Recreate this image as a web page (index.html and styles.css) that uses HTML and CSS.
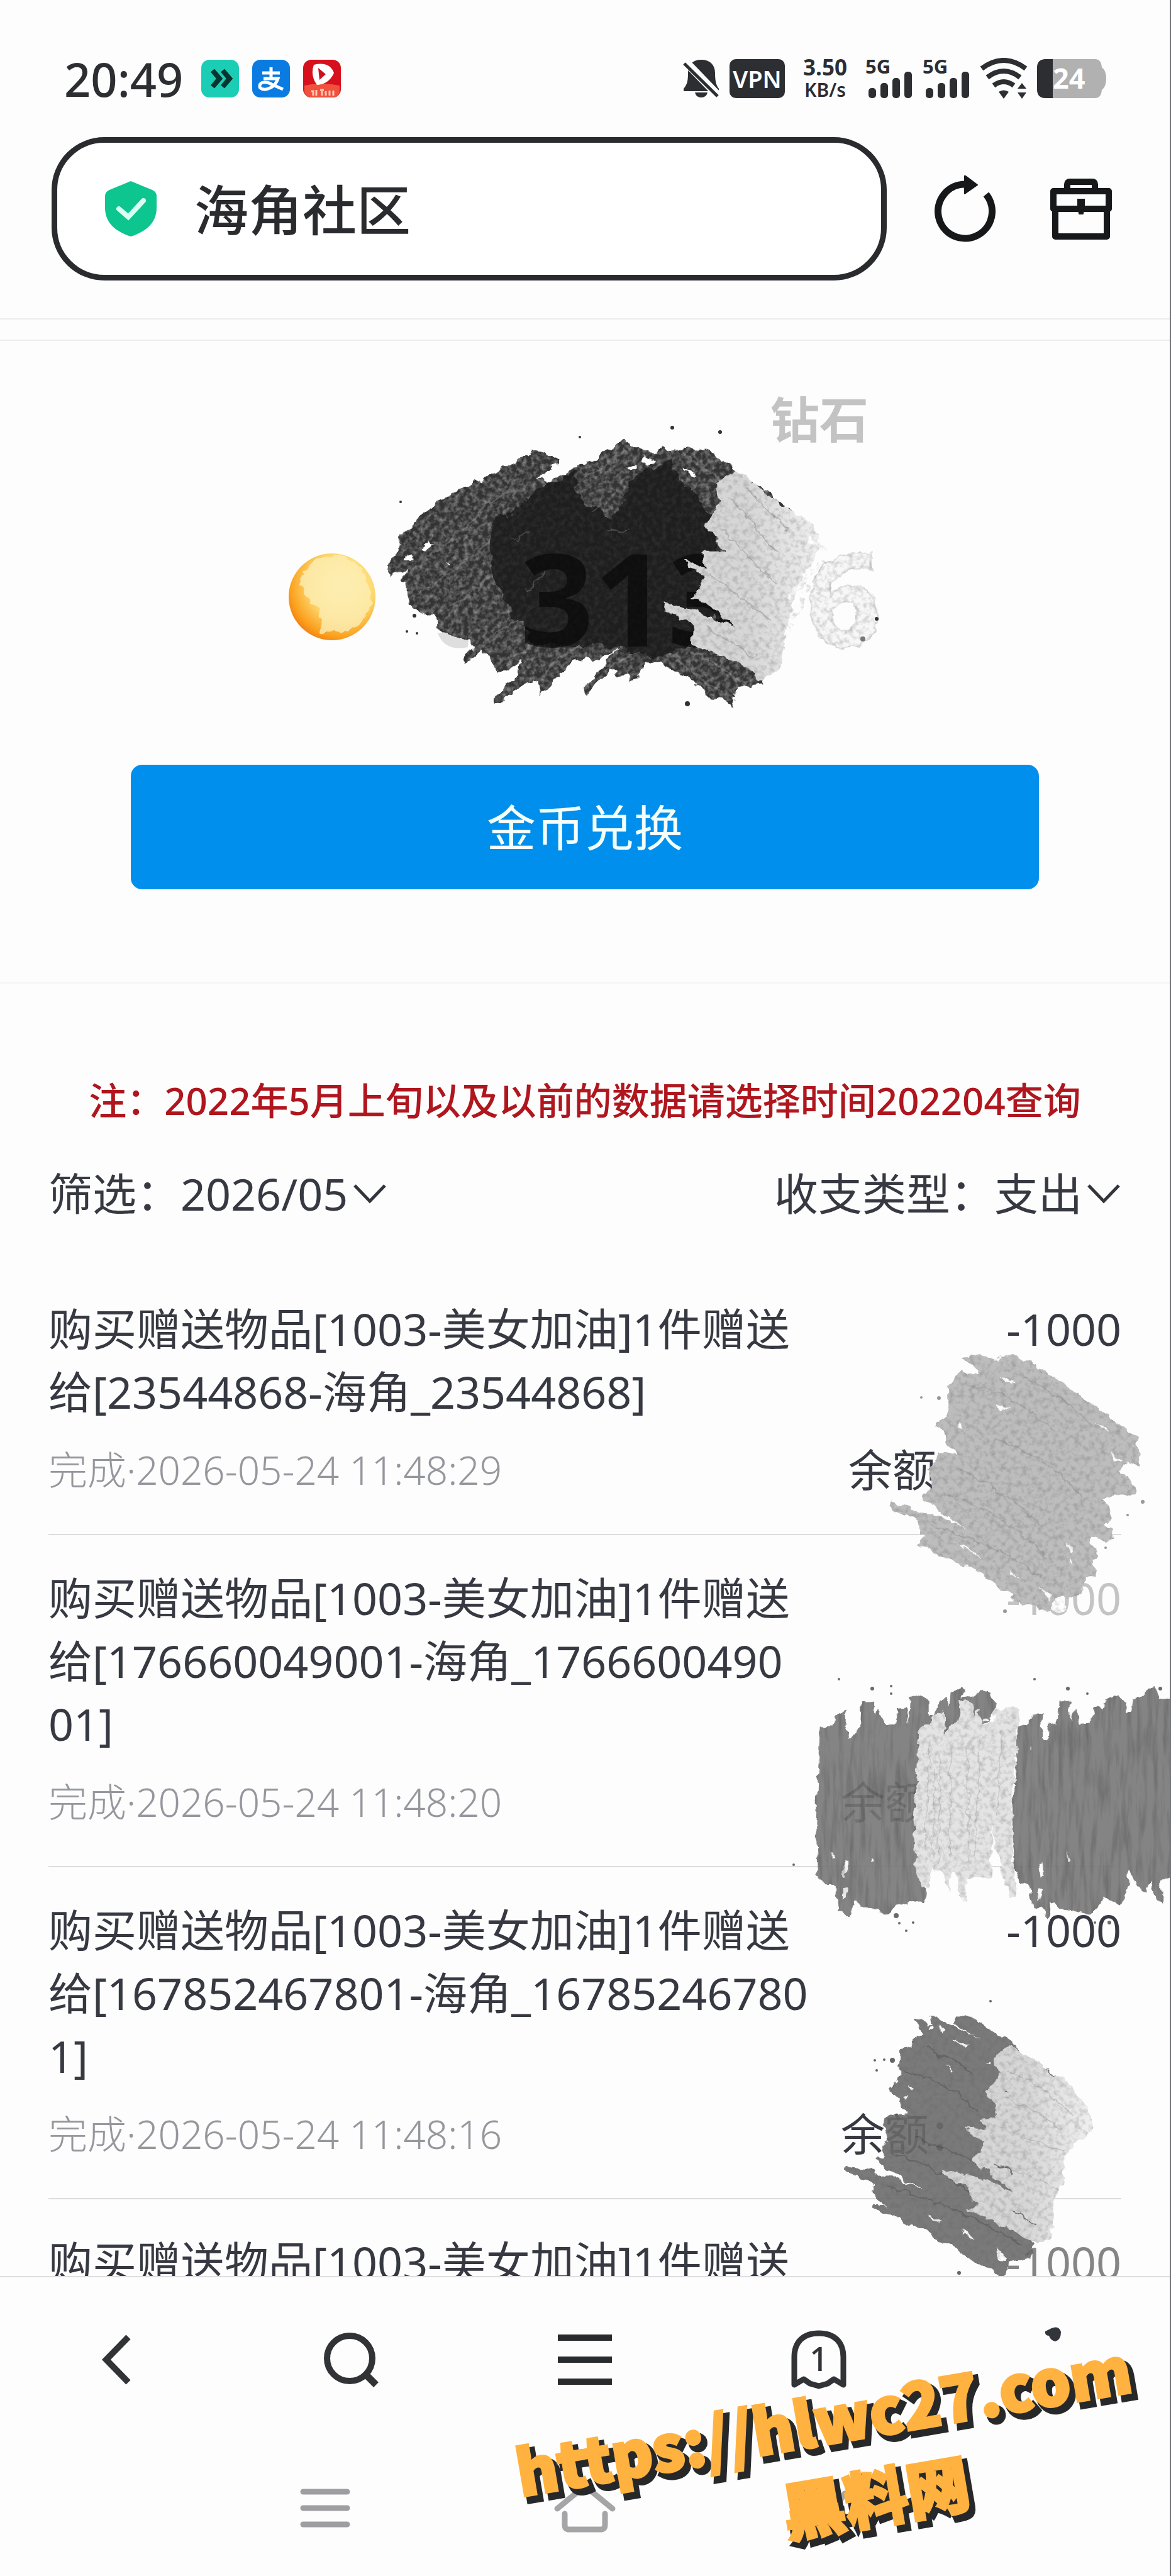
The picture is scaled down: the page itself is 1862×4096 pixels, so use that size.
FILE: index.html
```html
<!DOCTYPE html>
<html lang="zh-CN">
<head>
    <meta charset="UTF-8">
    <meta name="viewport" content="width=device-width, initial-scale=1.0">
    <title>海角社区</title>
    <link rel="stylesheet" href="styles.css">
</head>
<body>
    <div class="page">
        <header>
            <div class="status">
                <div class="status-left">
                    <span class="time">20:49</span>
                    <svg class="app" viewBox="0 0 60 60"><rect width="60" height="60" rx="13" fill="#1ccdb6"/><path d="M18 17l11 13-11 13M34 17l11 13-11 13" fill="none" stroke="#06352f" stroke-width="8"/></svg>
                    <svg class="app" viewBox="0 0 60 60"><rect width="60" height="60" rx="13" fill="#0a7be0"/><path d="M16 21h28M30 12v18M18 30h23c-3 9-8 13-13 15-8 4-17 2-16-4 1-7 12-6 19-2l18 8" fill="none" stroke="#fff" stroke-width="5"/></svg>
                    <svg class="app" viewBox="0 0 60 60"><rect width="60" height="60" rx="13" fill="#d6101d"/><path d="M2 41q28-6 56 0v8q0 11-11 11H13Q2 60 2 49z" fill="#f0503c"/><path d="M17 8q25-6 32 13-8 18-27 19Q11 25 17 8z" fill="#fff"/><path d="M24 13l12 10-10 9z" fill="#c91322"/><path d="M13 50h3v7M21 48v9M27 48h6M30 48v9M36 50v7M42 49v8M48 49v8" stroke="#ffc9b5" stroke-width="3" fill="none"/></svg>
                </div>
                <div class="status-right">
                    <svg class="bell" viewBox="0 0 60 64"><path d="M30 2c14 0 22 8 22 21 0 14 2 20 6 25v4H2v-4c6-7 7-13 7-25C9 10 16 2 30 2zM20 54h20q-2 8-10 8t-10-8z" fill="#2d2e32"/><path d="M2 2l56 58" stroke="#fdfdfd" stroke-width="13"/><path d="M3 8l53 52" stroke="#2d2e32" stroke-width="5"/></svg>
                    <span class="vpn">VPN</span>
                    <span class="speed">3.50<small>KB/s</small></span>
                    <svg class="signal" viewBox="0 0 76 66"><text x="0" y="25">5G</text><g fill="#2d2e32"><rect x="5" y="48" width="12" height="16" rx="5"/><rect x="24" y="40" width="12" height="24" rx="5"/><rect x="43" y="32" width="12" height="32" rx="5"/><rect x="62" y="22" width="12" height="42" rx="5"/></g></svg>
                    <svg class="signal" viewBox="0 0 76 66"><text x="0" y="25">5G</text><g fill="#2d2e32"><rect x="5" y="48" width="12" height="16" rx="5"/><rect x="24" y="40" width="12" height="24" rx="5"/><rect x="43" y="32" width="12" height="32" rx="5"/><rect x="62" y="22" width="12" height="42" rx="5"/></g></svg>
                    <svg class="wifi" viewBox="0 0 76 66"><path d="M3 17q35-26 70 0M12 31q26-20 52 0M22 44q16-12 32 0" fill="none" stroke="#2d2e32" stroke-width="8"/><path d="M30 54q8-5 16 0l-8 11zM60 49l7-9 7 9zM60 55h14l-7 10z" fill="#2d2e32"/></svg>
                    <svg class="battery" viewBox="0 0 110 62"><path d="M14 0h78q10 0 11 13 7 5 7 18t-7 18q-1 13-11 13H14Q0 62 0 48V14Q0 0 14 0z" fill="#b1b1b1"/><path d="M25 0H14Q0 0 0 14v34q0 14 14 14h11z" fill="#2d2e32"/><text x="25" y="47">24</text></svg>
                </div>
            </div>
            <div class="toolbar">
                <label class="address">
                    <svg class="shield" viewBox="0 0 82 88"><path d="M41 0l34 14q7 3 7 10v18c0 24-16 38-41 46C16 80 0 66 0 42V24q0-7 7-10z" fill="#0cc58f"/><path d="M22 44l15 13 24-26" fill="none" stroke="#d9fff2" stroke-width="8" stroke-linecap="round"/></svg>
                    <input type="text" value="海角社区" aria-label="地址">
                </label>
                <button class="icon" aria-label="刷新">
                    <svg width="100" height="106" viewBox="0 0 100 106"><path d="M83 30A43 43 0 1 1 50 14" fill="none" stroke="#17181a" stroke-width="11"/><path d="M49 0l20 15-20 14z" fill="#17181a" stroke="#17181a" stroke-width="2" stroke-linejoin="round"/></svg>
                </button>
                <button class="icon" aria-label="工具箱">
                    <svg width="100" height="100" viewBox="0 0 100 100"><path d="M28 20v-9q0-4 4-4h36q4 0 4 4v9M6 22h88v28H6zM9 50v44h82V50" fill="none" stroke="#17181a" stroke-width="10" stroke-linejoin="round"/><path d="M46 36h8v12l-2 9h-4l-2-9z" fill="#17181a" stroke="#17181a" stroke-width="4"/></svg>
                </button>
            </div>
        </header>

        <main>
            <section class="balance">
                <svg class="coins" viewBox="0 0 1062 560">
                    <defs>
                        <radialGradient id="coin" cx=".62" cy=".36" r=".75">
                            <stop offset="0" stop-color="#fff3a6"/>
                            <stop offset=".5" stop-color="#fdd76e"/>
                            <stop offset=".8" stop-color="#fba11f"/>
                            <stop offset="1" stop-color="#ee6a0a"/>
                        </radialGradient>
                        <linearGradient id="pale">
                            <stop offset=".55" stop-color="#d6d6d6"/>
                            <stop offset="1" stop-color="#f0f0f0"/>
                        </linearGradient>
                        <filter id="rough" x="-5%" y="-5%" width="110%" height="110%" color-interpolation-filters="sRGB">
                            <feTurbulence type="fractalNoise" baseFrequency=".05" numOctaves="3" seed="4" result="n"/>
                            <feDisplacementMap in="SourceGraphic" in2="n" scale="18" xChannelSelector="R" yChannelSelector="G" result="s"/>
                            <feTurbulence type="fractalNoise" baseFrequency=".13" numOctaves="3" seed="9"/>
                            <feColorMatrix values="0 0 0 0 .75  0 0 0 0 .75  0 0 0 0 .75  1.2 0 0 0 -.45"/>
                            <feComposite operator="in" in2="s" result="t"/>
                            <feMerge><feMergeNode in="s"/><feMergeNode in="t"/></feMerge>
                        </filter>
                        <filter id="edge" x="-5%" y="-5%" width="110%" height="110%" color-interpolation-filters="sRGB">
                            <feTurbulence type="fractalNoise" baseFrequency=".05" numOctaves="3" seed="6" result="n"/>
                            <feDisplacementMap in="SourceGraphic" in2="n" scale="22" xChannelSelector="R" yChannelSelector="G"/>
                        </filter>
                        <filter id="grain" x="-5%" y="-5%" width="110%" height="110%" color-interpolation-filters="sRGB">
                            <feTurbulence type="fractalNoise" baseFrequency=".06" numOctaves="3" seed="2" result="n"/>
                            <feDisplacementMap in="SourceGraphic" in2="n" scale="14" xChannelSelector="R" yChannelSelector="G" result="s"/>
                            <feTurbulence type="fractalNoise" baseFrequency=".12" numOctaves="3" seed="7"/>
                            <feColorMatrix values="0 0 0 0 .3  0 0 0 0 .3  0 0 0 0 .3  .6 0 0 0 -.26"/>
                            <feComposite operator="in" in2="s" result="t"/>
                            <feMerge><feMergeNode in="s"/><feMergeNode in="t"/></feMerge>
                        </filter>
                        <filter id="streak" x="-5%" y="-5%" width="110%" height="110%" color-interpolation-filters="sRGB">
                            <feTurbulence type="fractalNoise" baseFrequency=".05" numOctaves="3" seed="3" result="n"/>
                            <feDisplacementMap in="SourceGraphic" in2="n" scale="14" xChannelSelector="R" yChannelSelector="G" result="s"/>
                            <feTurbulence type="fractalNoise" baseFrequency=".12 .014" numOctaves="4" seed="5"/>
                            <feColorMatrix values="0 0 0 0 .25  0 0 0 0 .25  0 0 0 0 .25  1 0 0 0 -.42"/>
                            <feComposite operator="in" in2="s" result="t"/>
                            <feMerge><feMergeNode in="s"/><feMergeNode in="t"/></feMerge>
                        </filter>
                    </defs>
                    <text class="unit" x="826" y="105">钻石</text>
                    <circle cx="129" cy="357" r="69" fill="url(#coin)"/>
                    <path d="M80 345q-4-34 28-50 30-14 60 12 22 20 22 52 0 28-24 50-22 8-50 4-8-18-6-38-26-6-30-30z" fill="#fdeeb4" opacity=".8" filter="url(#edge)"/>
                    <path d="M297 415q12 30 48 22l2-32z" fill="#dedede"/>
                    <g filter="url(#rough)"><g transform="scale(.6633 .3571)">
                        <path fill="#333" d="M675 350L735 380 730 430 685 475 715 485 780 430 850 360 890 305 975 370 985 330 1010 360 1035 335 1080 338 1165 440 1300 620 1200 1300 1230 1390 1165 1400 1155 1485 1100 1440 1040 1350 980 1300 950 1290 910 1390 905 1340 880 1350 860 1330 805 1430 800 1400 880 1230 820 1290 805 1250 750 1330 695 1435 690 1370 655 1390 590 1480 585 1440 640 1350 650 1290 590 1335 580 1280 550 1240 510 1300 515 1250 540 1220 500 1180 445 1150 445 1090 375 1030 375 940 360 930 375 870 330 920 335 830 355 800 360 720 450 580 510 520 600 430z"/>
                        <path fill="none" stroke="#555" stroke-width="7" d="M380 900L640 480M400 1000L700 560M470 1080L660 760M560 1200L700 1020M620 1290L760 1100M700 1330L800 1200M850 1330L930 1230M800 470L900 350M1040 370l90 110M1010 1260l120 170M1060 1250l130 130"/>
                    </g></g>
                    <path fill="#fdfdfd" filter="url(#edge)" transform="scale(.6633 .3571)" d="M705 460l25-60 15 30-15 30zM410 790l15-40 10 15-12 35zM370 820l12-5v22h-12zM935 400l8-30 30 35-20 8zM900 425l25-15v20l-15 8zM1030 420l38 30-8 20zM470 850l10 5-6 8z"/>
                    <g filter="url(#edge)" opacity=".8"><g transform="scale(.6633 .3571)">
                        <path fill="#191919" d="M780 440L690 520 640 600 590 650 570 800 600 1000 680 1210 880 1220 960 1280 1050 1210 1110 1180 1110 900 1120 700 1070 560 1000 400 910 470 900 560 870 640 800 580 780 520z"/>
                        <path fill="none" stroke="#444" stroke-width="6" d="M630 750l30-50M860 700q20 40 50 0M820 620l30-40M790 540l50-70M700 900l-40 80"/>
                    </g></g>
                    <g class="ghost"><text x="428" y="436">313</text></g>
                    <g filter="url(#grain)"><g transform="scale(.6633 .3571)">
                        <path fill="url(#pale)" d="M1165 440L1115 500 1122 570 1090 680 1138 800 1080 800 1090 880 1040 830 1050 870 1088 905 1060 1000 1110 1060 1165 1135 1060 1060 985 1020 990 1060 1060 1120 1055 1210 1150 1280 1190 1320 1225 1380 1270 1310 1285 1150 1310 950 1365 780 1350 680 1260 570z"/>
                        <path fill="none" stroke="#fdfdfd" stroke-width="14" d="M1290 1000l80-160M1280 1180l60-240M1320 900l60-50M1340 740l40 60"/>
                        <path fill="none" stroke="#b5b5b5" stroke-width="4" d="M1150 560l110 240M1130 700l130 250M1100 900l150 210M1090 1130l120 140M1190 520l100 190"/>
                    </g></g>
                    <text class="faint" x="885" y="436" filter="url(#grain)">6</text>
                    <g fill="#333"><circle cx="238" cy="206" r="2"/><circle cx="523" cy="103" r="2"/><circle cx="670" cy="88" r="3"/><circle cx="746" cy="95" r="3"/><circle cx="260" cy="387" r="3"/><circle cx="248" cy="412" r="2"/><circle cx="264" cy="415" r="2"/><circle cx="694" cy="527" r="4"/><circle cx="995" cy="392" r="3"/><circle cx="973" cy="424" r="4" fill="#777"/></g>
                </svg>
                <button class="exchange">金币兑换</button>
            </section>

            <p class="note">注：2022年5月上旬以及以前的数据请选择时间202204查询</p>

            <div class="filters">
                <div class="filter">
                    <label for="month">筛选：</label>
                    <select id="month"><option>2026/05</option></select>
                    <svg class="caret" viewBox="0 0 56 36"><path d="M4 5l24 25L52 5" fill="none" stroke="#33353d" stroke-width="5"/></svg>
                </div>
                <div class="filter">
                    <label for="type">收支类型：</label>
                    <select id="type"><option>支出</option></select>
                    <svg class="caret" viewBox="0 0 56 36"><path d="M4 5l24 25L52 5" fill="none" stroke="#33353d" stroke-width="5"/></svg>
                </div>
            </div>

            <div class="records">
                <article class="record">
                    <div class="row"><p>购买赠送物品[1003-美女加油]1件赠送<br>给[23544868-海角_23544868]</p><span>-1000</span></div>
                    <div class="row meta"><time>完成·2026-05-24 11:48:29</time><span class="rest">余额：</span></div>
                </article>
                <article class="record">
                    <div class="row"><p>购买赠送物品[1003-美女加油]1件赠送<br>给[176660049001-海角_1766600490<br>01]</p><span class="worn">-1000</span></div>
                    <div class="row meta"><time>完成·2026-05-24 11:48:20</time><span class="rest">余额：</span></div>
                </article>
                <article class="record">
                    <div class="row"><p>购买赠送物品[1003-美女加油]1件赠送<br>给[167852467801-海角_16785246780<br>1]</p><span>-1000</span></div>
                    <div class="row meta"><time>完成·2026-05-24 11:48:16</time><span class="rest">余额：</span></div>
                </article>
                <article class="record">
                    <div class="row"><p>购买赠送物品[1003-美女加油]1件赠送</p><span class="worn dark">-1000</span></div>
                </article>

                <svg class="scribble first" viewBox="0 0 662 560">
                    <g filter="url(#grain)"><g transform="scale(.4224 .3571)">
                        <path fill="#bdbdbd" d="M780 350L840 340 915 370 925 345 990 345 1120 435 1270 560 1440 710 1450 840 1400 820 1375 855 1435 930 1430 965 1375 965 1310 985 1340 1040 1345 1080 1310 1085 1350 1120 1345 1165 1320 1170 1265 1150 1260 1180 1295 1210 1290 1250 1275 1255 1290 1325 1240 1330 1230 1410 1170 1420 1115 1440 1170 1490 1080 1485 955 1430 970 1410 900 1360 830 1300 610 1190 620 1165 650 1150 615 1130 620 1080 515 1030 515 1000 650 1050 700 1060 800 1120 630 985 640 960 665 940 660 850 690 780 760 780 715 730 715 690 680 660 725 620 725 490 780 420 850 425z"/>
                        <path fill="#fdfdfd" d="M925 430l55 40-35-8zM908 560l70 25-55 5zM760 650l30 25-25-8zM1285 645l50 45-30-15zM1345 775l40 50-30-10zM735 1175q80 25 125 80-60-50-125-80zM960 1290l30 50-22-20zM1075 1375l50 45-20 15zM1170 1180l28 35-10 5zM1185 1250l10 30-12-15z"/>
                        <path fill="none" stroke="#a9a9a9" stroke-width="6" d="M800 470q200 60 330 210M760 850q200 110 330 260M700 960q220 60 400 290M900 720q200 60 330 260M1010 440q160 90 260 220M660 1100q200 60 420 230"/>
                        <ellipse cx="1148" cy="1462" rx="25" ry="28" fill="#fdfdfd"/>
                    </g></g>
                    <g fill="#999"><circle cx="293" cy="191" r="3"/><circle cx="265" cy="190" r="2"/><circle cx="398" cy="530" r="3"/><circle cx="617" cy="356" r="3"/><circle cx="593" cy="377" r="2"/><circle cx="558" cy="429" r="2"/></g>
                </svg>

                <svg class="scribble second" viewBox="0 0 662 560">
                    <g filter="url(#streak)" opacity=".9"><g transform="scale(.4224 .3571)">
                        <path fill="#787878" d="M250 430L295 425 300 385 345 365 345 430 360 490 400 430 405 320 450 315 450 380 470 350 490 420 525 420 540 350 570 345 580 410 585 300 620 288 655 310 655 380 675 380 690 305 720 298 735 340 740 280 770 250 790 260 775 310 825 300 850 265 880 275 915 330 880 420 730 460 640 600 620 1090 645 1150 640 1220 580 1200 570 1220 530 1225 510 1260 480 1265 460 1240 395 1240 385 1210 375 1210 360 1285 335 1240 312 1240 300 1140 270 1140 240 1100 230 880 240 600z"/>
                        <path fill="#787878" d="M990 430L1035 420 1045 380 1082 365 1085 490 1105 490 1108 425 1140 420 1145 318 1187 315 1190 400 1208 355 1225 420 1265 415 1275 350 1300 340 1318 370 1322 300 1358 288 1392 320 1395 375 1418 370 1425 300 1465 295 1475 270 1505 250 1525 300 1600 290 1600 1100 1530 1105 1530 1215 1505 1190 1495 1115 1475 1170 1440 1140 1415 1070 1405 1150 1375 1225 1310 1195 1300 1220 1260 1265 1210 1250 1150 1240 1120 1200 1105 1285 1075 1230 1045 1240 1038 1140 1000 1130 975 1060 965 900 980 650z"/>
                        <path fill="#fdfdfd" d="M332 1030h14v70l-12 5zM440 1010l12 20-16 14zM290 990h6v20h-6zM330 1150l20-2-4 50-14 6zM350 440l15 40-12 10zM1065 1030h18v70l-12 5zM1060 1150l20-2-4 50-12 6zM1170 980l15 55-10 5zM1038 510h5v20h-5zM860 400h22v12h-22z"/>
                    </g></g>
                    <g filter="url(#grain)"><g transform="scale(.4224 .3571)">
                        <path fill="#e4e4e4" d="M620 440L655 420 660 390 690 365 715 370 715 420 720 470 735 420 760 410 775 320 800 310 818 330 825 385 835 350 860 420 895 415 905 360 940 345 1000 345 1000 400 985 450 985 560 975 700 970 900 975 1040 985 1180 960 1190 940 1110 905 970 895 870 890 1100 800 1100 795 1215 765 1180 755 1080 740 1070 738 1170 705 1080 690 1070 665 1060 660 1150 625 1140 605 1060 598 850 610 600z"/>
                        <path fill="none" stroke="#c8c8c8" stroke-width="4" d="M655 480l-10 500M700 560l-8 480M740 520l-6 500M800 500l4 540M850 480l-20 540M930 440l-20 380M680 620l-12 400"/>
                    </g></g>
                    <g fill="#6a6a6a"><circle cx="134" cy="78" r="2"/><circle cx="187" cy="93" r="3"/><circle cx="217" cy="89" r="2"/><circle cx="217" cy="101" r="2"/><circle cx="445" cy="78" r="2"/><circle cx="498" cy="93" r="3"/><circle cx="529" cy="101" r="2"/><circle cx="645" cy="93" r="3"/><circle cx="62" cy="373" r="2"/><circle cx="225" cy="454" r="4"/><circle cx="230" cy="466" r="2"/><circle cx="252" cy="465" r="2"/><circle cx="241" cy="478" r="2"/><circle cx="541" cy="465" r="2"/><circle cx="564" cy="465" r="3"/></g>
                </svg>

                <svg class="scribble third" viewBox="0 0 662 560">
                    <g filter="url(#grain)" opacity=".9"><g transform="scale(.4224 .3571)">
                        <path fill="#6c6c6c" d="M605 260L625 250 670 280 655 245 670 235 760 290 850 345 745 270 755 245 810 245 880 300 960 345 1000 395 1000 700 950 900 1000 1100 1050 1265 1045 1310 960 1335 945 1390 920 1390 860 1355 815 1330 745 1260 690 1245 640 1190 520 1135 440 1095 445 1075 480 1075 500 1095 445 1030 450 980 340 935 345 905 420 920 480 955 500 950 640 1020 560 970 455 880 460 865 490 870 480 830 500 790 485 690 520 675 580 680 545 640 540 595 500 570 545 520 545 440 550 385 600 370 605 330 640 325z"/>
                        <path fill="#fdfdfd" d="M745 335l58 30-8 16zM695 290h20l-5 30zM665 285l12 10-8 8zM730 460l20 25-4 8zM582 548l14 15-10 8zM562 605l15-4-6 18zM875 450l18-6v14zM655 1130q30 5 42 30-20-5-42-30zM775 1190q30 10 45 52-24-20-45-52zM903 1275l52 45-15 14-20-10z"/>
                        <path fill="none" stroke="#545454" stroke-width="6" d="M640 380q120 60 190 120M560 480q180 60 280 190M520 860q200 60 320 200M500 1000q280 90 500 260M600 780q140 50 230 120"/>
                    </g></g>
                    <g filter="url(#grain)"><g transform="scale(.4224 .3571)">
                        <path fill="url(#pale)" d="M965 370L910 405 905 460 925 490 900 530 865 575 905 640 910 690 850 700 870 745 790 735 800 755 865 800 850 850 820 890 990 1030 860 960 705 920 710 950 800 1000 810 1040 840 1080 800 1100 900 1155 980 1200 1060 1250 1120 1220 1125 1060 1165 960 1160 880 1210 800 1275 740 1250 640 1170 530z"/>
                        <path fill="none" stroke="#bfbfbf" stroke-width="4" d="M950 480q160 90 250 210M880 720q160 70 280 120M910 900q140 60 230 110M940 600q120 60 220 150"/>
                        <path fill="none" stroke="#6c6c6c" stroke-width="5" d="M910 900l60 35M970 1105l90 70M950 570l15 12M1105 475l25 25"/>
                    </g></g>
                    <g fill="#666"><circle cx="375" cy="62" r="2"/><circle cx="219" cy="156" r="4"/><circle cx="206" cy="155" r="2"/><circle cx="191" cy="156" r="2"/><circle cx="194" cy="172" r="2"/><circle cx="325" cy="494" r="3"/></g>
                </svg>
            </div>
        </main>

        <footer>
            <nav class="tabs">
                <button aria-label="后退"><svg width="90" height="96" viewBox="0 0 90 96"><path d="M63 12L28 48l35 36" fill="none" stroke="#323337" stroke-width="10"/></svg></button>
                <button aria-label="搜索"><svg width="90" height="96" viewBox="0 0 90 96"><circle cx="43" cy="46" r="36" fill="none" stroke="#323337" stroke-width="10"/><path d="M67 70l18 18" stroke="#323337" stroke-width="11"/></svg></button>
                <button aria-label="菜单"><svg width="90" height="96" viewBox="0 0 90 96"><path d="M2 13h86M2 48h86M2 83h86" stroke="#2a2b2f" stroke-width="10"/></svg></button>
                <button aria-label="标签页"><svg width="90" height="96" viewBox="0 0 90 96"><path d="M6 88V44C6 20 20 6 45 6s39 14 39 38v44L69 79 59 86 45 90 31 86 21 79z" fill="none" stroke="#323337" stroke-width="9" stroke-linejoin="round"/><text x="45" y="66">1</text></svg></button>
                <button aria-label="我的"><svg width="90" height="96" viewBox="0 0 90 96"><path d="M33 3l10-5q12-5 15 6 0 13-9 15-8-2-10-9-7 0-6-7z" fill="#32363b"/></svg></button>
            </nav>
            <nav class="system">
                <button aria-label="最近任务"><svg width="100" height="76" viewBox="0 0 100 76"><path d="M15 11h70M15 37h70M15 63h70" stroke="#9e9ea1" stroke-width="9" stroke-linecap="round"/></svg></button>
                <button aria-label="主页"><svg width="100" height="76" viewBox="0 0 100 76"><path d="M6 38L46 5q4-3 8 0l40 33M18 46v18q0 7 7 7h50q7 0 7-7V46" fill="none" stroke="#a5a5a7" stroke-width="9" stroke-linecap="round"/></svg></button>
                <button aria-label="返回"><svg width="100" height="76" viewBox="0 0 100 76"><path d="M50 14L34 38l22 18" fill="none" stroke="#a5a5a7" stroke-width="9" stroke-linecap="round"/></svg></button>
            </nav>
        </footer>

        <svg class="stamp" viewBox="0 0 1062 400">
            <g transform="rotate(-9.7 34 274)"><text class="shade" x="34" y="282">https://hlwc27.com</text><text x="28" y="273">https://hlwc27.com</text></g>
            <g transform="rotate(-9.7 460 342)"><text class="shade" x="458" y="346">黑料网</text><text x="452" y="337">黑料网</text></g>
        </svg>
    </div>
</body>
</html>
```
FILE: styles.css
```css
* {
    box-sizing: border-box;
}
body {
    margin: 0;
    background: #fdfdfd;
    color: #373942;
    font-family: "Noto Sans", "Noto Sans CJK SC", sans-serif;
    font-size: 70px;
}
button, input, select {
    font: inherit;
    color: inherit;
    border: none;
    background: none;
    padding: 0;
    margin: 0;
}
svg {
    display: block;
    flex-shrink: 0;
}
p {
    margin: 0;
}
.page {
    position: relative;
    display: flex;
    flex-direction: column;
    height: 100vh;
    overflow: hidden;
    border-right: 2px solid #70737b;
}

/* status bar */
.status {
    display: flex;
    justify-content: space-between;
    align-items: center;
    height: 70px;
    margin: 90px 101px 58px 102px;
    color: #2d2e32;
}
.status-left, .status-right {
    display: flex;
    align-items: center;
}
.status-left {
    gap: 21px;
}
.status-right {
    gap: 15px;
}
.time {
    font-size: 74px;
    font-weight: 500;
    margin-right: 8px;
}
.app {
    width: 60px;
    height: 60px;
}
.bell {
    width: 60px;
    height: 64px;
}
.vpn {
    width: 88px;
    height: 62px;
    border-radius: 10px;
    background: #2d2e32;
    color: #fff;
    font-size: 38px;
    font-weight: 600;
    line-height: 62px;
    text-align: center;
}
.speed {
    width: 98px;
    font-size: 35px;
    font-weight: 700;
    line-height: 36px;
    text-align: center;
}
.speed small {
    display: block;
    font-size: 30px;
    font-weight: 600;
}
.signal, .wifi {
    width: 76px;
    height: 66px;
}
.signal {
    overflow: visible;
}
.signal text {
    font-size: 31px;
    font-weight: 700;
    fill: #2d2e32;
}
.battery {
    width: 110px;
    height: 62px;
}
.battery text {
    font-size: 45px;
    font-weight: 700;
    fill: #fff;
}

/* address bar */
.toolbar {
    display: flex;
    align-items: center;
    padding: 0 91px 60px 82px;
    border-bottom: 2px solid #ececec;
}
.address {
    display: flex;
    flex: 1;
    min-width: 0;
    align-items: center;
    gap: 60px;
    height: 228px;
    padding: 0 76px;
    border: 9px solid #2a2b2e;
    border-radius: 84px;
    background: #fff;
}
.shield {
    width: 82px;
    height: 88px;
}
.address input {
    flex: 1;
    min-width: 0;
    padding-bottom: 6px;
    font-size: 86px;
    font-weight: 500;
    color: #2a2b2e;
}
.icon {
    margin-left: 84px;
}
.icon:nth-of-type(1) {
    margin-left: 75px;
}

/* balance */
main {
    flex: 1;
    min-height: 0;
    overflow: hidden;
    margin-top: 32px;
    border-top: 2px solid #ececec;
}
.balance {
    padding: 50px 208px 148px;
    border-bottom: 2px solid #f4f4f4;
}
.coins {
    width: 1062px;
    height: 560px;
    margin: 0 auto 64px;
}
.unit {
    font-size: 78px;
    font-weight: 700;
    fill: #c3c3c3;
}
.ghost text {
    font-size: 205px;
    font-weight: 700;
    fill: #080808;
    opacity: 0.7;
}
.faint {
    font-size: 205px;
    font-weight: 700;
    fill: #f7f7f7;
    stroke: #e2e2e2;
    stroke-width: 3px;
}
.exchange {
    display: block;
    width: 100%;
    height: 198px;
    padding-bottom: 6px;
    border-radius: 18px;
    background: #008fec;
    color: #f2fffb;
    font-size: 78px;
}

/* filters */
.note {
    margin-top: 146px;
    color: #b0161e;
    font-size: 60px;
    font-weight: 500;
    line-height: 80px;
    text-align: center;
}
.filters {
    display: flex;
    justify-content: space-between;
    margin-top: 68px;
    padding: 0 77px;
    line-height: 80px;
}
.filter {
    display: flex;
    align-items: center;
}
.filter select {
    appearance: none;
    height: 80px;
    line-height: 80px;
}
.caret {
    width: 56px;
    height: 36px;
    margin-left: 6px;
}

/* records */
.records {
    position: relative;
    margin-top: 75px;
    padding: 0 77px;
}
.record {
    padding: 50px 0 62px;
    border-bottom: 2px solid #dcdcde;
    white-space: nowrap;
}
.row {
    display: flex;
    justify-content: space-between;
    line-height: 100px;
}
.meta {
    margin-top: 34px;
    line-height: 80px;
}
.meta time {
    color: #96979d;
    font-size: 62px;
    font-weight: 300;
}
.rest {
    width: 446px;
}
.record:first-child .rest {
    width: 434px;
}
.worn {
    color: #c4c4c4;
}
.worn.dark {
    color: #858585;
}
.scribble {
    position: absolute;
    right: -2px;
    width: 662px;
    height: 560px;
}
.first {
    top: 19px;
}
.second {
    top: 579px;
}
.third {
    top: 1107px;
}

/* bottom bars */
footer {
    border-top: 2px solid #dedee0;
    background: #fdfdfd;
}
.tabs {
    display: grid;
    grid-template-columns: repeat(5, 1fr);
    height: 261px;
}
.system {
    display: flex;
    justify-content: center;
    gap: 313px;
    height: 214px;
}
footer button {
    display: flex;
    align-items: center;
    justify-content: center;
}
.tabs text {
    font-size: 52px;
    font-weight: 500;
    text-anchor: middle;
    fill: #323337;
}
.tabs svg, .stamp {
    overflow: visible;
}
.stamp {
    position: absolute;
    right: -2px;
    bottom: 0;
    width: 1062px;
    height: 400px;
    pointer-events: none;
}
.stamp text {
    font-family: "Noto Sans CJK SC", sans-serif;
    font-size: 100px;
    font-weight: 900;
    fill: #ffb23f;
    stroke: #ffb23f;
    stroke-width: 4px;
}
.stamp .shade {
    fill: #26282a;
    stroke: #26282a;
    stroke-width: 9px;
}
```
